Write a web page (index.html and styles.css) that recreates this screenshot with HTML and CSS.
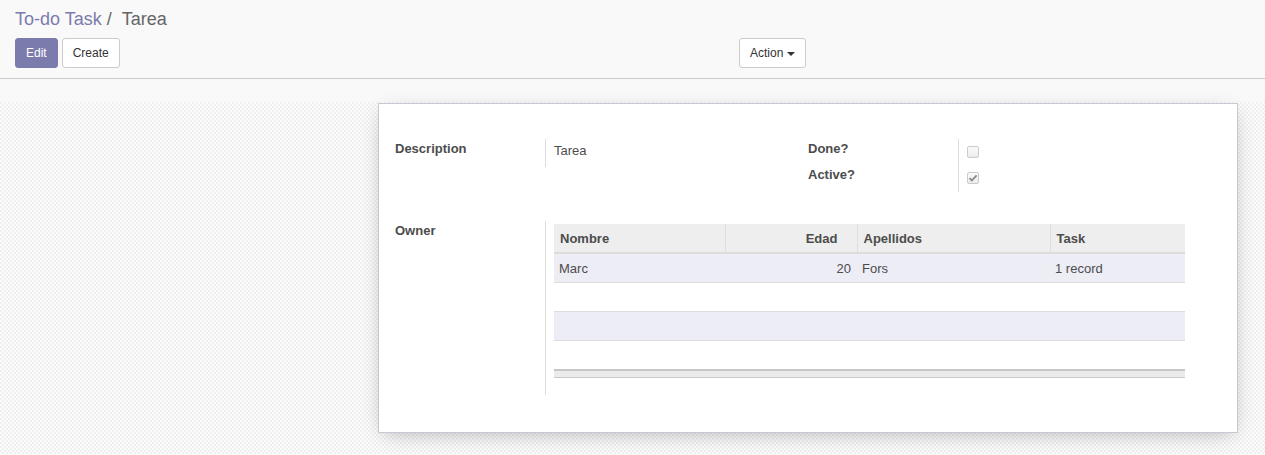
FILE: index.html
```html
<!DOCTYPE html>
<html>
<head>
<meta charset="utf-8">
<link rel="stylesheet" href="styles.css">
</head>
<body>
<div class="control-panel">
  <div class="breadcrumb"><span class="bc-link">To-do Task</span><span class="bc-sep">/&nbsp;</span><span class="bc-active">Tarea</span></div>
  <div class="cp-bottom">
    <div class="cp-buttons">
      <button class="btn btn-primary">Edit</button>
      <button class="btn btn-default">Create</button>
    </div>
    <div class="cp-sidebar">
      <button class="btn btn-default btn-action">Action <span class="caret"></span></button>
    </div>
  </div>
</div>
<div class="content">
  <div class="sheet-bg">
    <div class="sheet">
      <div class="outer-group">
        <div class="group">
          <div class="row row-desc">
            <div class="label-cell"><span class="label">Description</span></div>
            <div class="value-cell"><span class="value">Tarea</span></div>
          </div>
        </div>
        <div class="group">
          <div class="group-rows">
            <div class="row row-check">
              <div class="label-cell"><span class="label">Done?</span></div>
              <div class="value-cell"><span class="checkbox"></span></div>
            </div>
            <div class="row row-check">
              <div class="label-cell"><span class="label">Active?</span></div>
              <div class="value-cell"><span class="checkbox"><svg width="10" height="10" viewBox="0 0 10 10"><path d="M1.5 5.2 L3.8 7.5 L8.6 2.4" fill="none" stroke="#8a8a8a" stroke-width="1.8"/></svg></span></div>
            </div>
          </div>
        </div>
      </div>
      <div class="row row-owner">
        <div class="label-cell"><span class="label">Owner</span></div>
        <div class="value-cell owner-value">
          <table class="list">
            <thead>
              <tr><th class="c-nombre">Nombre</th><th class="c-edad num">Edad</th><th class="c-ape">Apellidos</th><th class="c-task">Task</th></tr>
            </thead>
            <tbody>
              <tr class="odd"><td>Marc</td><td class="num">20</td><td>Fors</td><td>1 record</td></tr>
              <tr><td></td><td></td><td></td><td></td></tr>
              <tr class="odd"><td></td><td></td><td></td><td></td></tr>
              <tr><td></td><td></td><td></td><td></td></tr>
            </tbody>
            <tfoot>
              <tr><td colspan="4"></td></tr>
            </tfoot>
          </table>
        </div>
      </div>
    </div>
  </div>
</div>
</body>
</html>
```
FILE: styles.css
```css
html, body {
  margin: 0;
  padding: 0;
}
body {
  font-family: "Liberation Sans", Arial, sans-serif;
  font-size: 13px;
  color: #4c4c4c;
  background: #f9f9f9;
  height: 455px;
  overflow: hidden;
}
.control-panel {
  background: #f9f9f9;
  border-bottom: 1px solid #cacaca;
  padding: 5px 15px 10px;
  height: 63px;
}
.breadcrumb {
  font-size: 18px;
  line-height: 28px;
  height: 28px;
  margin-bottom: 5px;
  white-space: nowrap;
}
.bc-link { color: #7c7bad; }
.bc-sep { color: #666; padding: 0 5px; }
.bc-active { color: #666; }
.cp-bottom {
  display: flex;
}
.cp-buttons {
  width: 724px;
  display: flex;
  gap: 4px;
}
.btn {
  font-family: "Liberation Sans", Arial, sans-serif;
  font-size: 12px;
  line-height: 18px;
  height: 30px;
  padding: 5px 10px;
  border-radius: 3px;
  border: 1px solid #ccc;
  background: #fff;
  color: #333;
  box-sizing: border-box;
  cursor: pointer;
}
.btn-primary {
  background: #7c7bad;
  border-color: #7c7bad;
  color: #fff;
}
.btn-action {
  padding: 5px 10px 5px 10px;
  display: flex;
  align-items: center;
}
.caret {
  display: inline-block;
  width: 0;
  height: 0;
  border-left: 4px solid transparent;
  border-right: 4px solid transparent;
  border-top: 4px solid #333;
  margin-left: 4px;
  margin-top: 1px;
}
.content {
  padding-top: 23px;
  background: #f9f9f9;
}
.sheet-bg {
  padding-top: 1px;
  height: 352px;
  box-sizing: border-box;
  background-color: #f6f6f6;
  background-image: repeating-conic-gradient(#fcfcfc 0 25%, #f0f0f0 0 50%);
  background-size: 4px 4px;
}
.sheet {
  margin-left: 378px;
  width: 860px;
  box-sizing: border-box;
  background: #fff;
  border: 1px solid #c9c9d6;
  box-shadow: 0 5px 20px -6px rgba(0,0,0,0.3);
  padding: 35px 16px 37px;
}
.outer-group {
  display: flex;
  width: 826px;
  height: 53px;
  margin-bottom: 29px;
}
.group {
  width: 413px;
}
.row {
  display: flex;
}
.label-cell {
  width: 151px;
  flex: none;
  border-right: 1px solid #ddd;
  box-sizing: border-box;
}
.label {
  font-weight: bold;
  line-height: 18px;
  display: block;
}
.row-desc .label {
  padding-top: 1px;
}
.value-cell {
  padding-left: 8px;
}
.row-desc {
  height: 28px;
}
.row-desc .value {
  display: block;
  line-height: 18px;
  padding-top: 3px;
}
.row-check {
  height: 26px;
}
.row-check:last-child {
  height: 27px;
}
.row-check .label {
  padding-top: 1px;
}
.checkbox {
  display: flex;
  align-items: center;
  justify-content: center;
  width: 12px;
  height: 12px;
  box-sizing: border-box;
  border: 1px solid #ccc;
  border-radius: 2px;
  background: linear-gradient(#fafafa, #ececec);
  margin-top: 7px;
}
.row-owner {
  height: 174px;
}
.row-owner .label {
  padding-top: 1px;
}
.owner-value {
  padding-top: 3px;
}
.list {
  width: 631px;
  border-collapse: collapse;
  font-size: 13px;
}
.list th {
  background: #eee;
  font-weight: bold;
  text-align: left;
  height: 29px;
  padding: 0 6px;
  border-bottom: 2px solid #dcdcdc;
  box-sizing: border-box;
  color: #4c4c4c;
}
.list th + th {
  border-left: 1px solid #dedede;
}
.list th.num {
  text-align: right;
  padding-right: 19px;
}
.c-nombre { width: 171px; }
.c-edad { width: 132px; }
.c-ape { width: 193px; }
.list td {
  height: 28px;
  padding: 0 6px 0 5px;
  border-top: 1px solid #ddd;
}
.list tbody tr:first-child td {
  border-top: none;
}
.list td.num {
  text-align: right;
}
.list tbody tr.odd td {
  background: #ededf6;
}
.list tfoot td {
  height: 6px;
  padding: 0;
  background: #ebebeb;
  border-top: 2px solid #c6c6c6;
  border-bottom: 1px solid #c9c9c9;
}
```
